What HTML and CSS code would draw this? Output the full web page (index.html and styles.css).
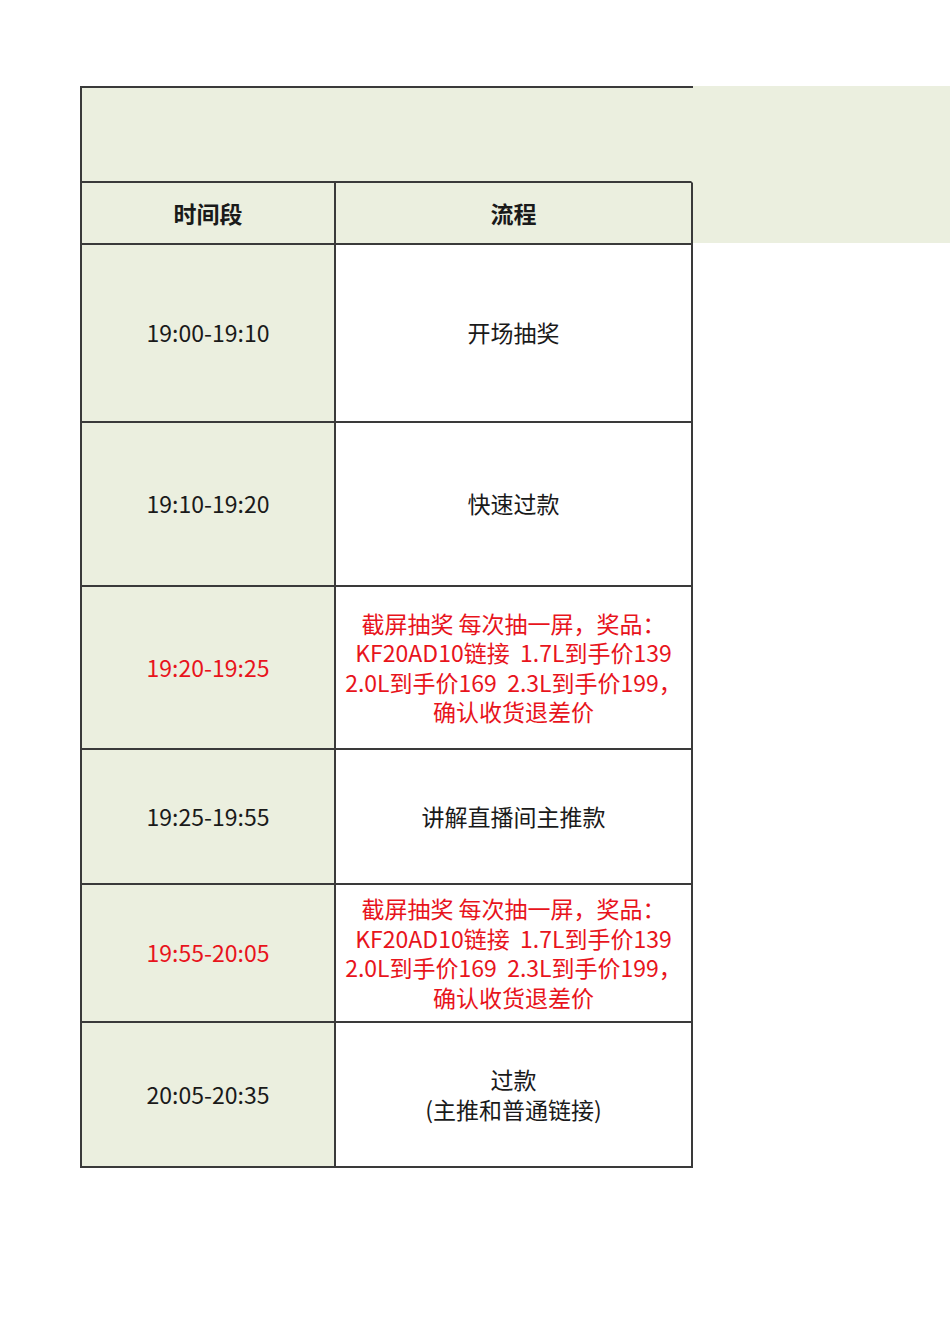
FILE: index.html
```html
<!DOCTYPE html>
<html lang="zh-CN">
<head>
<meta charset="utf-8">
<title>直播流程</title>
<link rel="stylesheet" href="styles.css">
</head>
<body>
<div class="sheet">
  <div class="table">
    <div class="cell title"></div>
    <div class="cell head c1">时间段</div>
    <div class="cell head c2">流程</div>

    <div class="cell time r1">19:00-19:10</div>
    <div class="cell flow r1">开场抽奖</div>

    <div class="cell time r2">19:10-19:20</div>
    <div class="cell flow r2">快速过款</div>

    <div class="cell time red r3">19:20-19:25</div>
    <div class="cell flow red r3">截屏抽奖 每次抽一屏，奖品：<br>KF20AD10链接&nbsp; 1.7L到手价139<br>2.0L到手价169&nbsp; 2.3L到手价199，<br>确认收货退差价</div>

    <div class="cell time r4">19:25-19:55</div>
    <div class="cell flow r4">讲解直播间主推款</div>

    <div class="cell time red r5">19:55-20:05</div>
    <div class="cell flow red r5">截屏抽奖 每次抽一屏，奖品：<br>KF20AD10链接&nbsp; 1.7L到手价139<br>2.0L到手价169&nbsp; 2.3L到手价199，<br>确认收货退差价</div>

    <div class="cell time r6">20:05-20:35</div>
    <div class="cell flow r6">过款<br>(主推和普通链接)</div>
  </div>
  <div class="band"></div>
</div>
</body>
</html>
```

FILE: styles.css
```css
html, body {
  margin: 0;
  padding: 0;
  background: #ffffff;
}

body {
  font-family: "Noto Sans CJK SC", "Noto Sans", sans-serif;
  font-size: 23px;
  color: #1a1a1a;
}

.sheet {
  display: flex;
  align-items: flex-start;
  padding-top: 86px;
  padding-left: 80px;
}

.table {
  display: grid;
  grid-template-columns: 254px 357px;
  grid-template-rows: 95px 62px 178px 164px 163px 135px 138px 145px;
  border-left: 2px solid #3a3a3a;
  border-top: 2px solid #3a3a3a;
  flex: none;
}

.band {
  flex: 1;
  height: 157px;
  background: #ebefdf;
}

.cell {
  display: flex;
  align-items: center;
  justify-content: center;
  text-align: center;
  border-right: 2px solid #3a3a3a;
  border-bottom: 2px solid #3a3a3a;
  line-height: 29.5px;
  white-space: nowrap;
}

.title {
  grid-column: 1 / 3;
  background: #ebefdf;
  border-right-color: transparent;
}

.head {
  background: #ebefdf;
  font-weight: 700;
  padding-top: 2px;
}

.time {
  background: #ebefdf;
}

.flow {
  background: #ffffff;
}

.red {
  color: #e8141c;
}
```
